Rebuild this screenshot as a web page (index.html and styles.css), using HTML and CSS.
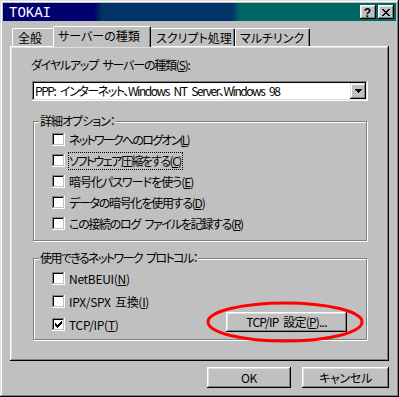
FILE: index.html
```html
<!DOCTYPE html>
<html lang="ja">
<head>
<meta charset="utf-8">
<title>TOKAI</title>
<link rel="stylesheet" href="styles.css">
</head>
<body>
<div class="win">
  <div class="titlebar">
    <span class="title">TOKAI</span>
    <div class="tbtns">
      <span class="tbtn help">?</span>
      <span class="tbtn close"><svg width="8" height="7" viewBox="0 0 8 7"><path d="M0 0h2v1H0zM6 0h2v1H6zM1 1h2v1H1zM5 1h2v1H5zM2 2h4v1H2zM3 3h2v1H3zM2 4h4v1H2zM1 5h2v1H1zM5 5h2v1H5zM0 6h2v1H0zM6 6h2v1H6z" fill="#000"/></svg></span>
    </div>
  </div>
  <div class="content">
    <div class="tabs">
      <div class="tab t1">全般</div>
      <div class="tab sel">サーバーの種類</div>
      <div class="tab t3">スクリプト処理</div>
      <div class="tab t4">マルチリンク</div>
    </div>
    <div class="panel">
      <div class="label">ダイヤルアップ サーバーの種類(<u>S</u>):</div>
      <div class="combo">
        <span class="combo-text">PPP: インターネット、Windows NT Server、Windows 98</span>
        <span class="drop"><svg width="7" height="4" viewBox="0 0 7 4"><path d="M0 0h7v1h-1v1h-1v1h-1v1h-1v-1h-1v-1h-1v-1h-1z" fill="#000"/></svg></span>
      </div>
      <div class="group g1">
        <div class="legend">詳細オプション：</div>
        <div class="row r1"><span class="cb"></span><span class="txt k1">ネットワークへのログオン(<u>L</u>)</span></div>
        <div class="row r1"><span class="cb"></span><span class="txt focus">ソフトウェア圧縮をする(<u>C</u>)</span></div>
        <div class="row r1"><span class="cb"></span><span class="txt">暗号化パスワードを使う(<u>E</u>)</span></div>
        <div class="row r1"><span class="cb"></span><span class="txt k4">データの暗号化を使用する(<u>D</u>)</span></div>
        <div class="row r1"><span class="cb"></span><span class="txt k5">この接続のログ ファイルを記録する(<u>R</u>)</span></div>
      </div>
      <div class="group g2">
        <div class="legend">使用できるネットワーク プロトコル：</div>
        <div class="row r2"><span class="cb"></span><span class="txt latin">NetBEUI(<u>N</u>)</span></div>
        <div class="row r2"><span class="cb"></span><span class="txt latin">IPX/SPX 互換(<u>I</u>)</span></div>
        <div class="row r2"><span class="cb"><svg width="7" height="7" viewBox="0 0 7 7"><path d="M0 2H1V3H2V4H3V3H4V2H5V1H6V0H7V3H6V4H5V5H4V6H3V7H2V6H1V5H0Z" fill="#000"/></svg></span><span class="txt latin">TCP/IP(<u>T</u>)</span><span class="btn tcp">TCP/IP 設定(<u>P</u>)...</span></div>
      </div>
    </div>
    <div class="buttons">
      <span class="btn ok">OK</span>
      <span class="btn cancel">キャンセル</span>
    </div>
  </div>
  <svg class="mark" width="160" height="44" viewBox="0 0 160 44"><ellipse cx="81" cy="22" rx="77" ry="19" fill="none" stroke="#ff0000" stroke-width="3"/></svg>
</div>
</body>
</html>
```

FILE: styles.css
```css
* { box-sizing: border-box; }
html, body { margin: 0; padding: 0; background: #c0c0c0; }
body {
  font-family: "Noto Sans CJK JP", sans-serif;
  font-size: 12px;
  color: #000;
  font-feature-settings: "palt";
}
u { text-decoration: underline; text-underline-offset: 1px; }

.win {
  position: relative;
  width: 399px;
  height: 397px;
  background: #c0c0c0;
  padding: 3px;
  box-shadow: inset -1px -1px 0 #000, inset 1px 1px 0 #dfdfdf,
              inset -2px -2px 0 #808080, inset 2px 2px 0 #fff;
}

.titlebar {
  height: 18px;
  display: flex;
  align-items: center;
  justify-content: space-between;
  padding: 0 2px 0 6px;
  background: linear-gradient(to right, #000070 0, #000070 91px, #003366 99px, #003366 229px, #006666 237px, #006666 100%);
}
.title {
  font-family: "Liberation Mono", monospace;
  font-size: 14px;
  color: #fff;
  padding-top: 1px;
}
.tbtns { display: flex; gap: 2px; }
.tbtn {
  width: 16px;
  height: 14px;
  display: flex;
  align-items: center;
  justify-content: center;
  background: #c0c0c0;
  box-shadow: inset -1px -1px 0 #000, inset 1px 1px 0 #fff,
              inset -2px -2px 0 #808080, inset 2px 2px 0 #dfdfdf;
}
.help {
  font-family: "Liberation Sans", sans-serif;
  font-weight: bold;
  font-size: 12px;
  line-height: 12px;
  padding-top: 1px;
  padding-right: 1px;
}
.close svg { display: block; margin-right: 1px; }

.content { padding: 5px 7px 0 7px; }

.tabs {
  height: 20px;
  display: flex;
  align-items: flex-end;
  padding-left: 2px;
}
.tab {
  height: 18px;
  padding: 1px 0 0 6px;
  line-height: 16px;
  white-space: nowrap;
  background: #c0c0c0;
  border-top: 1px solid #fff;
  border-left: 1px solid #fff;
  border-right: 1px solid #000;
  border-radius: 2px 2px 0 0;
  box-shadow: inset -1px 0 0 #808080;
}
.tab.t1 { width: 43px; padding-left: 5px; }
.tab.sel {
  position: relative;
  z-index: 1;
  width: 98px;
  height: 21px;
  margin: 0 -2px -1px -2px;
  padding: 1px 0 0 4px;
}
.tab.t3 { width: 86px; }
.tab.t4 { width: 75px; padding-left: 4px; }

.panel {
  width: 379px;
  height: 315px;
  padding: 12px 0 0 22px;
  background: #c0c0c0;
  letter-spacing: -1px;
  word-spacing: 3px;
  box-shadow: inset -1px -1px 0 #000, inset 1px 1px 0 #fff,
              inset -2px -2px 0 #808080, inset 2px 2px 0 #dfdfdf;
}
.label {
  line-height: 14px;
  margin-left: -1px;
  white-space: nowrap;
  letter-spacing: -1.2px;
}
.combo {
  margin-top: 9px;
  width: 336px;
  height: 20px;
  padding: 2px;
  display: flex;
  align-items: center;
  background: #fff;
  box-shadow: inset -1px -1px 0 #fff, inset 1px 1px 0 #808080,
              inset -2px -2px 0 #dfdfdf, inset 2px 2px 0 #000;
}
.combo-text {
  flex: 1;
  padding-left: 1px;
  line-height: 16px;
  white-space: nowrap;
  letter-spacing: -1.45px;
  word-spacing: 3.5px;
}
.drop {
  width: 16px;
  height: 16px;
  display: flex;
  align-items: center;
  justify-content: center;
  background: #c0c0c0;
  box-shadow: inset -1px -1px 0 #000, inset 1px 1px 0 #dfdfdf,
              inset -2px -2px 0 #808080, inset 2px 2px 0 #fff;
}
.drop svg { display: block; }

.group {
  margin-left: 1px;
  width: 334px;
  border: 1px solid #808080;
  box-shadow: 1px 1px 0 #fff, inset 1px 1px 0 #fff;
}
.group.g1 { margin-top: 20px; height: 120px; }
.group.g2 { margin-top: 17px; height: 82px; }
.legend {
  width: fit-content;
  margin: -8px 0 0 5px;
  padding: 0 1px;
  line-height: 14px;
  background: #c0c0c0;
  white-space: nowrap;
}
.g1 .legend { margin-bottom: 1px; }
.g2 .legend { margin-bottom: 2px; letter-spacing: -1.6px; }

.row {
  display: flex;
  align-items: center;
  padding-left: 18px;
  white-space: nowrap;
}
.row.r1 { height: 21px; }
.row.r2 { height: 23px; }
.cb {
  width: 13px;
  height: 13px;
  flex: none;
  display: flex;
  align-items: center;
  justify-content: center;
  background: #fff;
  box-shadow: inset -1px -1px 0 #fff, inset 1px 1px 0 #808080,
              inset -2px -2px 0 #c0c0c0, inset 2px 2px 0 #000;
}
.cb svg { display: block; }
.txt {
  margin-left: 4px;
  line-height: 14px;
}
.txt.k1 { letter-spacing: -1.75px; }
.txt.k4 { letter-spacing: -1.25px; }
.txt.k5 { letter-spacing: -1.3px; }
.txt.latin { letter-spacing: -0.3px; word-spacing: 2px; }
.txt.focus {
  margin-left: 3px;
  line-height: 16px;
  border: 1px dotted #000;
  padding-right: 1px;
  letter-spacing: -1.55px;
}

.btn {
  display: flex;
  align-items: center;
  justify-content: center;
  height: 21px;
  line-height: 14px;
  background: #c0c0c0;
  white-space: nowrap;
  letter-spacing: -0.3px;
  box-shadow: inset -1px -1px 0 #000, inset 1px 1px 0 #fff,
              inset -2px -2px 0 #808080, inset 2px 2px 0 #dfdfdf;
}
.btn.tcp {
  width: 121px;
  height: 20px;
  margin-left: auto;
  margin-right: 19px;
  align-self: flex-start;
  margin-top: -1px;
  letter-spacing: -0.8px;
  word-spacing: 3px;
}

.buttons {
  margin-top: 6px;
  display: flex;
  justify-content: flex-end;
  gap: 11px;
}
.btn.ok { width: 84px; }
.btn.cancel { width: 87px; }

.mark {
  position: absolute;
  left: 204px;
  top: 300px;
  display: block;
}
```
